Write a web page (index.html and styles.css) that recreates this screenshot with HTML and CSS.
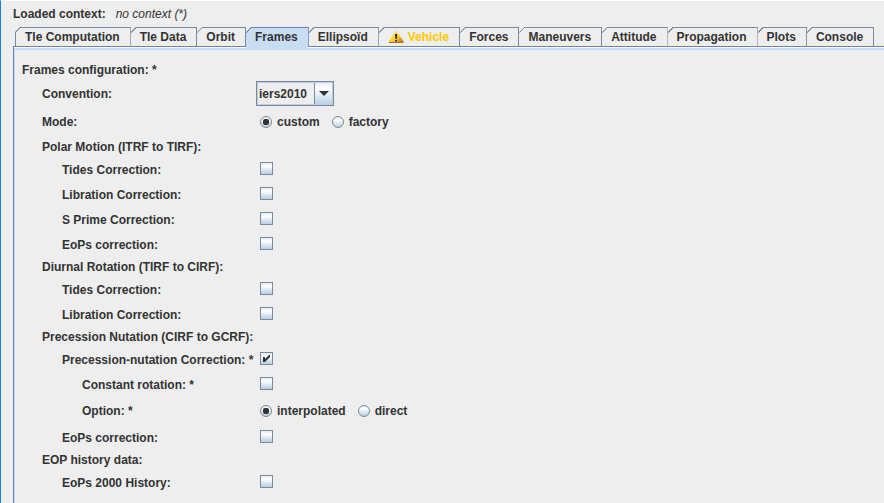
FILE: index.html
```html
<!DOCTYPE html>
<html lang="en">
<head>
<meta charset="utf-8">
<title>Frames configuration</title>
<link rel="stylesheet" href="styles.css">
</head>
<body>
<header class="context"><span>Loaded context:</span><em>no context (*)</em></header>
<nav class="tabs" role="tablist">
<button class="tab" role="tab">Tle Computation</button>
<button class="tab" role="tab">Tle Data</button>
<button class="tab" role="tab">Orbit</button>
<button class="tab selected" role="tab" aria-selected="true">Frames</button>
<button class="tab" role="tab">Ellipsoïd</button>
<button class="tab warning" role="tab"><svg class="warn-icon" width="16" height="14" viewBox="0 0 16 14" aria-hidden="true"><defs><linearGradient id="amber" x1="0" y1="0" x2="1" y2="1"><stop offset="0" stop-color="#fff3b8"/><stop offset=".55" stop-color="#fbcf2c"/><stop offset="1" stop-color="#a86400"/></linearGradient></defs><path d="M7 1.500Q8 0 9 1.500L15.600 11.500Q16 13 14.500 13H1.500Q0 13 .4 11.500Z" fill="url(#amber)"/><path d="M1 12.500H15" stroke="#a8742c"/><path d="M7 4H9.200L8.800 9H7.500ZM7.300 10H9V11.600H7.300Z" fill="#222"/></svg>Vehicle</button>
<button class="tab" role="tab">Forces</button>
<button class="tab" role="tab">Maneuvers</button>
<button class="tab" role="tab">Attitude</button>
<button class="tab" role="tab">Propagation</button>
<button class="tab" role="tab">Plots</button>
<button class="tab" role="tab">Console</button>
</nav>
<main class="panel">
<form class="form">
<div class="row heading">Frames configuration: *</div>
<div class="row combo-row level1"><label for="convention">Convention:</label><span class="combo"><select id="convention"><option>iers2010</option></select><svg class="arrow" width="10" height="5" viewBox="0 0 10 5" aria-hidden="true"><path d="M0 0H10L5 5Z" fill="#333"/></svg></span></div>
<div class="row mode-row level1"><span>Mode:</span><span class="radios"><label><input type="radio" name="mode" checked>custom</label><label><input type="radio" name="mode">factory</label></span></div>
<div class="row heading level1">Polar Motion (ITRF to TIRF):</div>
<div class="row level2"><label for="pt">Tides Correction:</label><input type="checkbox" id="pt"></div>
<div class="row level2"><label for="pl">Libration Correction:</label><input type="checkbox" id="pl"></div>
<div class="row level2"><label for="ps">S Prime Correction:</label><input type="checkbox" id="ps"></div>
<div class="row level2"><label for="pe">EoPs correction:</label><input type="checkbox" id="pe"></div>
<div class="row heading level1">Diurnal Rotation (TIRF to CIRF):</div>
<div class="row level2"><label for="dt">Tides Correction:</label><input type="checkbox" id="dt"></div>
<div class="row level2"><label for="dl">Libration Correction:</label><input type="checkbox" id="dl"></div>
<div class="row heading level1">Precession Nutation (CIRF to GCRF):</div>
<div class="row level2"><label for="pn">Precession-nutation Correction: *</label><input type="checkbox" id="pn" checked></div>
<div class="row level3"><label for="cr">Constant rotation: *</label><input type="checkbox" id="cr"></div>
<div class="row option-row level3"><span>Option: *</span><span class="radios"><label><input type="radio" name="option" checked>interpolated</label><label><input type="radio" name="option">direct</label></span></div>
<div class="row level2"><label for="ne">EoPs correction:</label><input type="checkbox" id="ne"></div>
<div class="row heading level1">EOP history data:</div>
<div class="row level2"><label for="eh">EoPs 2000 History:</label><input type="checkbox" id="eh"></div>
</form>
</main>
</body>
</html>
```
FILE: styles.css
```css
* { box-sizing: border-box; }

body {
  margin: 0;
  min-height: 100vh;
  display: flex;
  flex-direction: column;
  padding-left: 12px;
  border-top: 1px solid #fff;
  border-left: 1px solid #1883d7;
  background: #eee;
  color: #333;
  font: bold 12px/16px "Liberation Sans", Arial, sans-serif;
}

button, select { font: inherit; color: inherit; }

.context {
  display: flex;
  gap: 10px;
  padding: 5px 0;
}

.context em { font-weight: normal; }

.tabs {
  display: flex;
  padding-left: 2px;
}

.tab {
  display: flex;
  align-items: center;
  gap: 4px;
  height: 19px;
  margin: 0;
  padding: 0 10px 0 9px;
  border: 0;
  border-top: 1px solid #7a8a99;
  border-right: 1px solid #7a8a99;
  background: linear-gradient(135deg, #eee 4px, #7a8a99 4px, #7a8a99 5px, transparent 5px) 0 -1px no-repeat border-box;
  clip-path: polygon(5px 0, 100% 0, 100% 100%, 0 100%, 0 5px);
  white-space: nowrap;
}

.tab:first-child { border-left: 1px solid #7a8a99; }

/* The open tab runs into the panel; its right edge stops at the panel line. */
.selected {
  height: 22px;
  margin-bottom: -3px;
  padding-bottom: 3px;
  border-color: #6382bf;
  background: linear-gradient(135deg, #eee 4px, #6382bf 4px, #6382bf 5px, #c8ddf2 5px) 0 -1px no-repeat border-box;
  clip-path: polygon(5px 0, 100% 0, 100% 20px, calc(100% - 1px) 20px, calc(100% - 1px) 100%, 0 100%, 0 5px);
}

.warning { color: #ffc800; }

.panel {
  flex: 1;
  border-top: 1px solid #6382bf;
  border-left: 1px solid #6382bf;
  box-shadow: inset 0 1px #fff, inset 1px 3px #c8ddf2;
}

.form { padding: 13px 8px 8px; }

.row {
  display: grid;
  grid-template-columns: 234px 1fr;
  align-items: center;
  min-height: 25px;
}

.heading { min-height: 20px; }
.combo-row { min-height: 27px; }
.mode-row { min-height: 30px; }
.option-row { min-height: 28px; }

.level1 { padding-left: 20px; grid-template-columns: 214px 1fr; }
.level2 { padding-left: 40px; grid-template-columns: 194px 1fr; }
.level3 { padding-left: 60px; grid-template-columns: 174px 1fr; }

.radios {
  display: flex;
  gap: 12px;
  padding-left: 4px;
}

.radios label {
  display: flex;
  align-items: center;
  gap: 5px;
}

input {
  appearance: none;
  margin: 0;
  border: 1px solid #7a8a99;
  background: linear-gradient(#e3edf7, #fff 30%, #dde8f3 60%, #b8cfe5);
}

input[type="checkbox"] {
  display: grid;
  place-items: center;
  width: 13px;
  height: 13px;
  margin: 0 0 2px 4px;
}

input[type="checkbox"]:checked::before {
  content: "";
  width: 7px;
  height: 7px;
  background: #333;
  clip-path: polygon(0 2px, 2px 2px, 2px 4px, 6px 0, 7px 0, 7px 2px, 2px 7px, 0 7px);
}

input[type="radio"] {
  display: grid;
  place-items: center;
  width: 12px;
  height: 12px;
  border-radius: 50%;
}

input[type="radio"]:checked::before {
  content: "";
  width: 6px;
  height: 6px;
  border-radius: 2px;
  background: #333;
}

.combo {
  position: relative;
  justify-self: start;
  height: 25px;
}

.combo select {
  appearance: none;
  height: 25px;
  margin: 0;
  padding: 0 25px 0 2px;
  border: 1px solid #7a8a99;
  border-radius: 0;
  background:
    linear-gradient(#7a8a99, #7a8a99) right 18px top 0 / 1px 100% no-repeat,
    linear-gradient(#e3edf7, #fff 30%, #dde8f3 60%, #b8cfe5) right / 18px 100% no-repeat,
    #eee;
  box-shadow: inset 0 0 0 1px #b8cfe5;
}

.arrow {
  position: absolute;
  right: 5px;
  top: 10px;
  pointer-events: none;
}
```
